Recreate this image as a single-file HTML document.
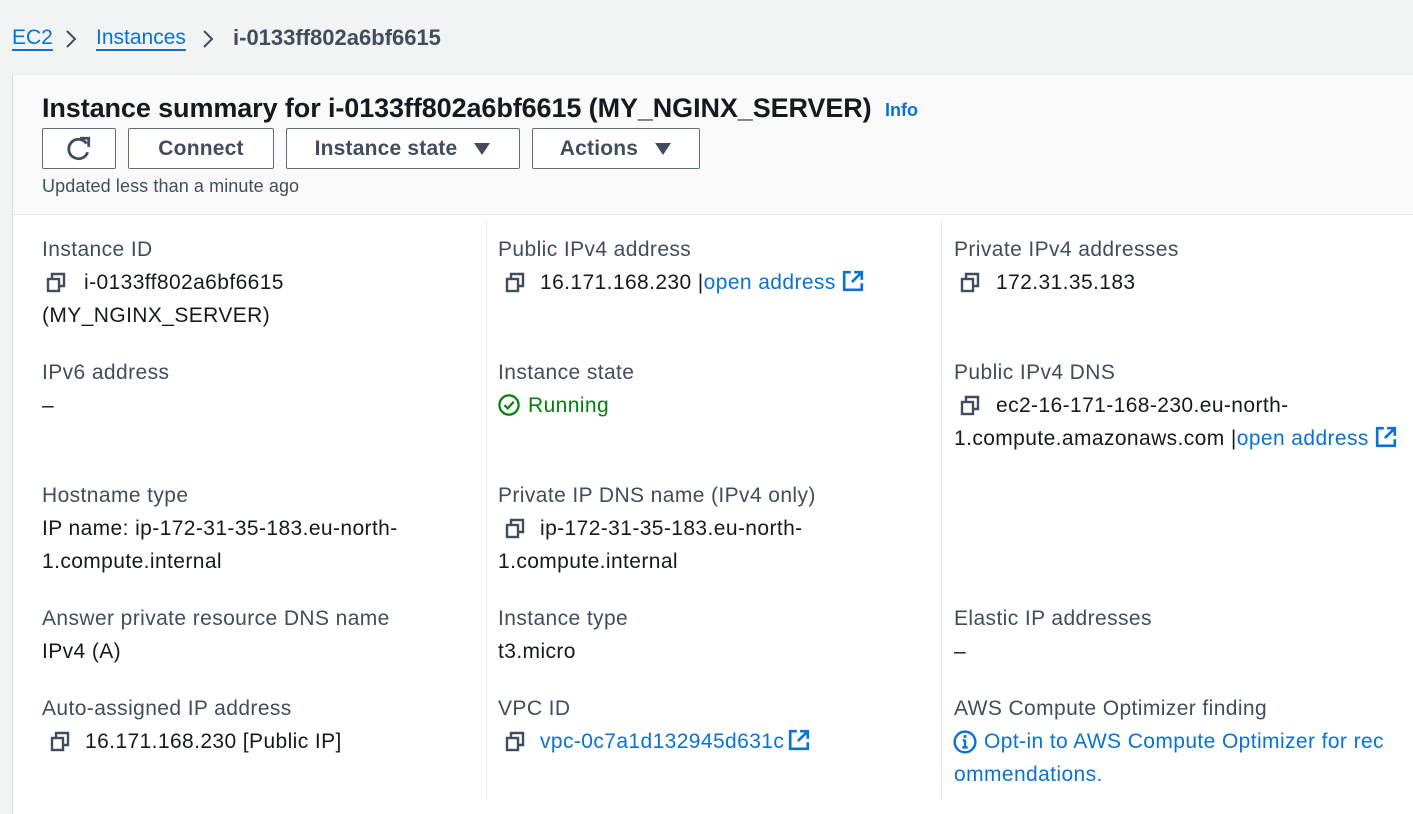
<!DOCTYPE html>
<html><head><meta charset="utf-8"><style>
*{margin:0;padding:0;box-sizing:border-box}
body{width:1413px;height:792px;overflow:hidden;background:#f2f3f3;font-family:"Liberation Sans",sans-serif;color:#16191f;position:relative}
.a{position:absolute;white-space:nowrap;font-size:21px;line-height:26px;letter-spacing:0.4px}
.l{color:#414d5c}
.k{color:#0972d3}
.panel{position:absolute;left:12px;top:74px;width:1420px;height:740px;background:#fff;border-left:1px solid #d5dbdb;border-top:1px solid #e9ebed}
.hdr{position:absolute;left:0;top:0;right:0;height:140px;background:#fafafa;border-bottom:1px solid #e9ebed}
.btn{position:absolute;top:128px;height:41px;border:1px solid #5f6b7a;border-radius:2px;background:#fff;font-weight:bold;font-size:21px;color:#414d5c;display:flex;align-items:center;justify-content:center;letter-spacing:0.2px}
.vd{position:absolute;top:220px;width:1px;height:580px;background:#e9ebed}
svg.c{position:absolute;width:22px;height:22px}
svg.e{display:inline-block;vertical-align:-3px;width:22px;height:22px;margin-left:6px}
</style></head><body>
<div class="a k" style="left:12px;top:25px;font-size:21px;letter-spacing:0;text-decoration:underline;text-underline-offset:5px">EC2</div>
<svg style="position:absolute;left:64px;top:29px" width="14" height="20"><path d="M3 2l8 8-8 8" stroke="#414d5c" stroke-width="2" fill="none"/></svg>
<div class="a k" style="left:96px;top:25px;font-size:21px;letter-spacing:0;text-decoration:underline;text-underline-offset:5px">Instances</div>
<svg style="position:absolute;left:201px;top:29px" width="14" height="20"><path d="M3 2l8 8-8 8" stroke="#414d5c" stroke-width="2" fill="none"/></svg>
<div class="a" style="left:233px;top:25px;font-size:22px;letter-spacing:0;color:#414d5c;font-weight:bold">i-0133ff802a6bf6615</div>

<div class="panel"><div class="hdr"></div></div>
<div class="a" style="left:42px;top:91px;font-size:27px;line-height:34px;font-weight:bold;letter-spacing:-0.1px">Instance summary for i-0133ff802a6bf6615 (MY_NGINX_SERVER)</div>
<div class="a k" style="left:885px;top:97px;font-size:18px;font-weight:bold;letter-spacing:0">Info</div>
<div class="btn" style="left:42px;width:74px"><svg width="28" height="28" viewBox="0 0 26 26"><path d="M20 8A9 9 0 1 0 21 16" stroke="#414d5c" stroke-width="2.6" fill="none"/><path d="M14 3h8v8" stroke="#414d5c" stroke-width="2.6" fill="none"/></svg></div>
<div class="btn" style="left:128px;width:146px">Connect</div>
<div class="btn" style="left:286px;width:234px">Instance state<svg style="margin-left:16px" width="18" height="14" viewBox="0 0 18 14"><path d="M1 1h16L9 13z" fill="#414d5c"/></svg></div>
<div class="btn" style="left:532px;width:168px">Actions<svg style="margin-left:16px" width="18" height="14" viewBox="0 0 18 14"><path d="M1 1h16L9 13z" fill="#414d5c"/></svg></div>
<div class="a l" style="left:42px;top:173px;font-size:18px;letter-spacing:0.1px">Updated less than a minute ago</div>

<div class="vd" style="left:486px"></div>
<div class="vd" style="left:941px"></div>

<!-- col1 -->
<div class="a l" style="left:42px;top:237px">Instance ID</div>
<svg class="c" style="left:45px;top:272px" viewBox="0 0 22 22"><path d="M7 6V2h12v12h-5" stroke="#414d5c" stroke-width="2.4" fill="none"/><rect x="3" y="7" width="11" height="12" stroke="#414d5c" stroke-width="2.4" fill="none"/></svg>
<div class="a" style="left:84px;top:270px">i-0133ff802a6bf6615</div>
<div class="a" style="left:42px;top:303px">(MY_NGINX_SERVER)</div>
<div class="a l" style="left:42px;top:360px">IPv6 address</div>
<div class="a" style="left:42px;top:393px">–</div>
<div class="a l" style="left:42px;top:483px">Hostname type</div>
<div class="a" style="left:42px;top:516px">IP name: ip-172-31-35-183.eu-north-</div>
<div class="a" style="left:42px;top:549px">1.compute.internal</div>
<div class="a l" style="left:42px;top:606px">Answer private resource DNS name</div>
<div class="a" style="left:42px;top:639px">IPv4 (A)</div>
<div class="a l" style="left:42px;top:696px">Auto-assigned IP address</div>
<svg class="c" style="left:49px;top:731px" viewBox="0 0 22 22"><path d="M7 6V2h12v12h-5" stroke="#414d5c" stroke-width="2.4" fill="none"/><rect x="3" y="7" width="11" height="12" stroke="#414d5c" stroke-width="2.4" fill="none"/></svg>
<div class="a" style="left:85px;top:729px">16.171.168.230 [Public IP]</div>

<!-- col2 -->
<div class="a l" style="left:498px;top:237px">Public IPv4 address</div>
<svg class="c" style="left:504px;top:272px" viewBox="0 0 22 22"><path d="M7 6V2h12v12h-5" stroke="#414d5c" stroke-width="2.4" fill="none"/><rect x="3" y="7" width="11" height="12" stroke="#414d5c" stroke-width="2.4" fill="none"/></svg>
<div class="a" style="left:540px;top:270px">16.171.168.230 |<span class="k">open address</span><svg class="e" viewBox="0 0 20 20"><path d="M8 2H2v16h16v-6M11 2h7v7M18 2l-9 9" stroke="#0972d3" stroke-width="2.4" fill="none"/></svg></div>
<div class="a l" style="left:498px;top:360px">Instance state</div>
<svg class="c" style="left:498px;top:394px" viewBox="0 0 22 22"><circle cx="11" cy="11" r="9.6" stroke="#037f0c" stroke-width="2.2" fill="none"/><path d="M6.5 11.2l3.2 3.2 6-6.6" stroke="#037f0c" stroke-width="2.2" fill="none"/></svg>
<div class="a" style="left:528px;top:393px;color:#037f0c">Running</div>
<div class="a l" style="left:498px;top:483px">Private IP DNS name (IPv4 only)</div>
<svg class="c" style="left:504px;top:518px" viewBox="0 0 22 22"><path d="M7 6V2h12v12h-5" stroke="#414d5c" stroke-width="2.4" fill="none"/><rect x="3" y="7" width="11" height="12" stroke="#414d5c" stroke-width="2.4" fill="none"/></svg>
<div class="a" style="left:540px;top:516px">ip-172-31-35-183.eu-north-</div>
<div class="a" style="left:498px;top:549px">1.compute.internal</div>
<div class="a l" style="left:498px;top:606px">Instance type</div>
<div class="a" style="left:498px;top:639px">t3.micro</div>
<div class="a l" style="left:498px;top:696px">VPC ID</div>
<svg class="c" style="left:504px;top:731px" viewBox="0 0 22 22"><path d="M7 6V2h12v12h-5" stroke="#414d5c" stroke-width="2.4" fill="none"/><rect x="3" y="7" width="11" height="12" stroke="#414d5c" stroke-width="2.4" fill="none"/></svg>
<div class="a k" style="left:540px;top:729px">vpc-0c7a1d132945d631c<svg class="e" style="margin-left:4px" viewBox="0 0 20 20"><path d="M8 2H2v16h16v-6M11 2h7v7M18 2l-9 9" stroke="#0972d3" stroke-width="2.4" fill="none"/></svg></div>

<!-- col3 -->
<div class="a l" style="left:954px;top:237px">Private IPv4 addresses</div>
<svg class="c" style="left:959px;top:272px" viewBox="0 0 22 22"><path d="M7 6V2h12v12h-5" stroke="#414d5c" stroke-width="2.4" fill="none"/><rect x="3" y="7" width="11" height="12" stroke="#414d5c" stroke-width="2.4" fill="none"/></svg>
<div class="a" style="left:996px;top:270px">172.31.35.183</div>
<div class="a l" style="left:954px;top:360px">Public IPv4 DNS</div>
<svg class="c" style="left:959px;top:395px" viewBox="0 0 22 22"><path d="M7 6V2h12v12h-5" stroke="#414d5c" stroke-width="2.4" fill="none"/><rect x="3" y="7" width="11" height="12" stroke="#414d5c" stroke-width="2.4" fill="none"/></svg>
<div class="a" style="left:996px;top:393px">ec2-16-171-168-230.eu-north-</div>
<div class="a" style="left:954px;top:426px">1.compute.amazonaws.com |<span class="k">open address</span><svg class="e" viewBox="0 0 20 20"><path d="M8 2H2v16h16v-6M11 2h7v7M18 2l-9 9" stroke="#0972d3" stroke-width="2.4" fill="none"/></svg></div>
<div class="a l" style="left:954px;top:606px">Elastic IP addresses</div>
<div class="a" style="left:954px;top:639px">–</div>
<div class="a l" style="left:954px;top:696px">AWS Compute Optimizer finding</div>
<svg class="c" style="left:953px;top:730px;width:24px;height:24px" viewBox="0 0 22 22"><circle cx="11" cy="11" r="9.5" stroke="#0972d3" stroke-width="2.2" fill="none"/><path d="M11 9v7M8.5 16h5M9 9.5h2" stroke="#0972d3" stroke-width="2.2" fill="none"/><circle cx="11" cy="6" r="1.4" fill="#0972d3"/></svg>
<div class="a k" style="left:984px;top:729px">Opt-in to AWS Compute Optimizer for rec</div>
<div class="a k" style="left:954px;top:762px">ommendations.</div>
</body></html>
